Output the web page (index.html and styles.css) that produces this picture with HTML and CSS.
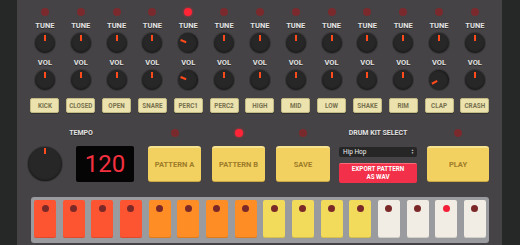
FILE: index.html
```html
<!DOCTYPE html>
<html lang="en">
<head>
    <meta charset="UTF-8">
    <title>Drum Machine</title>
    <link rel="stylesheet" href="styles.css">
</head>
<body>
    <div class="machine">
        <section class="channels">
            <div class="channel"><span class="led"></span><p class="label">TUNE</p><div class="knob"></div><p class="label">VOL</p><div class="knob"></div><button class="pad">KICK</button></div>
            <div class="channel"><span class="led"></span><p class="label">TUNE</p><div class="knob"></div><p class="label">VOL</p><div class="knob"></div><button class="pad">CLOSED</button></div>
            <div class="channel"><span class="led"></span><p class="label">TUNE</p><div class="knob"></div><p class="label">VOL</p><div class="knob"></div><button class="pad">OPEN</button></div>
            <div class="channel"><span class="led"></span><p class="label">TUNE</p><div class="knob"></div><p class="label">VOL</p><div class="knob"></div><button class="pad">SNARE</button></div>
            <div class="channel"><span class="led on"></span><p class="label">TUNE</p><div class="knob" style="transform: rotate(-68deg)"></div><p class="label">VOL</p><div class="knob" style="transform: rotate(-68deg)"></div><button class="pad">PERC1</button></div>
            <div class="channel"><span class="led"></span><p class="label">TUNE</p><div class="knob"></div><p class="label">VOL</p><div class="knob"></div><button class="pad">PERC2</button></div>
            <div class="channel"><span class="led"></span><p class="label">TUNE</p><div class="knob"></div><p class="label">VOL</p><div class="knob"></div><button class="pad">HIGH</button></div>
            <div class="channel"><span class="led"></span><p class="label">TUNE</p><div class="knob"></div><p class="label">VOL</p><div class="knob"></div><button class="pad">MID</button></div>
            <div class="channel"><span class="led"></span><p class="label">TUNE</p><div class="knob"></div><p class="label">VOL</p><div class="knob"></div><button class="pad">LOW</button></div>
            <div class="channel"><span class="led"></span><p class="label">TUNE</p><div class="knob"></div><p class="label">VOL</p><div class="knob"></div><button class="pad">SHAKE</button></div>
            <div class="channel"><span class="led"></span><p class="label">TUNE</p><div class="knob"></div><p class="label">VOL</p><div class="knob"></div><button class="pad">RIM</button></div>
            <div class="channel"><span class="led"></span><p class="label">TUNE</p><div class="knob"></div><p class="label">VOL</p><div class="knob" style="transform: rotate(-118deg)"></div><button class="pad">CLAP</button></div>
            <div class="channel"><span class="led"></span><p class="label">TUNE</p><div class="knob"></div><p class="label">VOL</p><div class="knob"></div><button class="pad">CRASH</button></div>
        </section>

        <section class="controls">
            <div class="group tempo">
                <p class="label head">TEMPO</p>
                <div class="tempo-body">
                    <div class="knob big"></div>
                    <div class="lcd">120</div>
                </div>
            </div>
            <div class="group">
                <span class="led head"></span>
                <button class="big-btn">PATTERN A</button>
            </div>
            <div class="group">
                <span class="led on head"></span>
                <button class="big-btn">PATTERN B</button>
            </div>
            <div class="group">
                <span class="led head"></span>
                <button class="big-btn save">SAVE</button>
            </div>
            <div class="group kit">
                <p class="label head">DRUM KIT SELECT</p>
                <div class="select">
                    <span>Hip Hop</span>
                    <span class="arrows">&#9650;<br>&#9660;</span>
                </div>
                <button class="export">EXPORT PATTERN<br>AS WAV</button>
            </div>
            <div class="group">
                <span class="led head"></span>
                <button class="big-btn play">PLAY</button>
            </div>
        </section>

        <section class="sequencer">
            <div class="step red"><span class="dot"></span></div>
            <div class="step red"><span class="dot"></span></div>
            <div class="step red"><span class="dot"></span></div>
            <div class="step red"><span class="dot"></span></div>
            <div class="step orange"><span class="dot"></span></div>
            <div class="step orange"><span class="dot"></span></div>
            <div class="step orange"><span class="dot"></span></div>
            <div class="step orange"><span class="dot"></span></div>
            <div class="step yellow"><span class="dot"></span></div>
            <div class="step yellow"><span class="dot"></span></div>
            <div class="step yellow"><span class="dot"></span></div>
            <div class="step yellow"><span class="dot"></span></div>
            <div class="step white"><span class="dot"></span></div>
            <div class="step white"><span class="dot"></span></div>
            <div class="step white"><span class="dot active"></span></div>
            <div class="step white"><span class="dot"></span></div>
        </section>
    </div>
</body>
</html>
```

FILE: styles.css
```css
body {
    margin: 0;
    background-color: #262727;
    font-family: Roboto, "Liberation Sans", Arial, sans-serif;
    overflow: hidden;
}

.machine {
    margin-left: 17px;
    width: 485px;
    height: 245px;
    background-color: #454345;
}

.channels {
    display: grid;
    grid-template-columns: repeat(13, 35.83px);
    padding-left: 10px;
}

.channel {
    display: flex;
    flex-direction: column;
    align-items: center;
}

.led {
    display: block;
    width: 8px;
    height: 8px;
    border-radius: 50%;
    background-color: #7a2a2d;
    margin-top: 8px;
}

.led.on {
    background-color: #ff2436;
    box-shadow: 0 0 3px rgba(255, 40, 60, 0.7);
}

.label {
    margin: 0;
    font-size: 7.5px;
    line-height: 9px;
    font-weight: 700;
    color: #e2e2e2;
    text-shadow: 0 1px 0 #2a2a2a;
}

.channel .label {
    margin-top: 4.5px;
}

.knob {
    position: relative;
    width: 20px;
    height: 20px;
    border-radius: 50%;
    background-color: #272727;
    box-shadow: 0 0 0 1px #383638, inset 0 -1px 2px rgba(0, 0, 0, 0.4);
    margin-top: 3.5px;
}

.knob::after {
    content: "";
    position: absolute;
    left: 9px;
    top: 2px;
    width: 2px;
    height: 6px;
    background-color: #ff4a1c;
}

.pad {
    margin-top: 8px;
    width: 29px;
    height: 15px;
    padding: 0;
    border: 1px solid #c3b985;
    border-radius: 2px;
    background-color: #ebe2ad;
    font-family: inherit;
    font-size: 6.3px;
    font-weight: 700;
    color: #77714f;
    box-shadow: 0 1px 0 rgba(0, 0, 0, 0.25);
}

.controls {
    display: flex;
    align-items: flex-start;
    padding-left: 11px;
    margin-top: 16px;
}

.group {
    display: flex;
    flex-direction: column;
    align-items: center;
    margin-right: 11px;
}

.group .head {
    height: 8px;
    line-height: 8px;
    margin: 0 0 9px 0;
}

.group .label.head {
    font-size: 7px;
}

.tempo {
    margin-right: 14px;
}

.tempo-body {
    display: flex;
    align-items: center;
    gap: 14px;
}

.knob.big {
    width: 34px;
    height: 34px;
    margin-top: -1px;
}

.knob.big::after {
    left: 16px;
    top: 1px;
    height: 6px;
}

.lcd {
    width: 58px;
    height: 36px;
    border-radius: 2px;
    background-color: #050505;
    color: #f2303f;
    font-size: 24px;
    line-height: 36px;
    text-align: center;
}

.big-btn {
    width: 53px;
    height: 36px;
    padding: 0;
    border: none;
    border-top: 2px solid #f7e290;
    border-bottom: 1px solid #c9a844;
    border-radius: 3px;
    background-color: #f2d160;
    font-family: inherit;
    font-size: 7.5px;
    font-weight: 700;
    color: #9d7b28;
}

.big-btn.save {
    width: 54px;
}

.kit {
    margin-left: -2px;
    margin-right: 10px;
}

.select {
    display: flex;
    justify-content: space-between;
    align-items: center;
    box-sizing: border-box;
    width: 78px;
    height: 10px;
    margin-top: 1px;
    padding: 0 3px 0 4px;
    border-radius: 2px;
    background-color: #262626;
    color: #f0f0f0;
    font-size: 6.5px;
}

.arrows {
    font-size: 3px;
    line-height: 3px;
    color: #cfcfcf;
    text-align: center;
}

.export {
    margin-top: 6px;
    width: 78px;
    height: 20px;
    padding: 0;
    border: none;
    border-top: 1px solid #ff6a78;
    border-radius: 2px;
    background-color: #f2304a;
    color: #ffffff;
    font-family: inherit;
    font-size: 6.3px;
    line-height: 7.5px;
    font-weight: 700;
}

.big-btn.play {
    width: 62px;
}

.sequencer {
    display: grid;
    grid-template-columns: repeat(16, 1fr);
    column-gap: 6.67px;
    width: 452px;
    margin: 14px 0 0 14px;
    padding: 3px 3px 5px 3px;
    border-radius: 3px;
    background-color: #999b9e;
}

.step {
    height: 38px;
    border-radius: 2px;
    display: flex;
    justify-content: center;
    box-shadow: inset 0 -1px 0 rgba(0, 0, 0, 0.12);
}

.step.red { background-color: #fd5532; }
.step.orange { background-color: #fd8d24; }
.step.yellow { background-color: #f2da5b; }
.step.white { background-color: #f1ede4; }

.dot {
    width: 7px;
    height: 7px;
    margin-top: 5px;
    border-radius: 50%;
    background-color: #7b2828;
}

.dot.active {
    background-color: #f4203a;
}
```
